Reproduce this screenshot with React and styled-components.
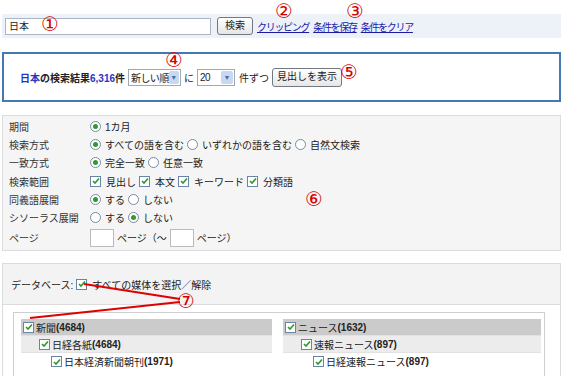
import React from 'react'
import styled, { createGlobalStyle } from 'styled-components'

const GlobalStyle = createGlobalStyle`
    body {
        margin: 0;
        background: #ffffff;
        font-family: 'Liberation Sans', 'Noto Sans CJK JP', sans-serif;
        font-size: 10px;
        color: #222222;
    }
`

const Page = styled.div`
    position: relative;
    width: 563px;
    height: 376px;
    overflow: hidden;
    padding: 14px 2px 0 2px;
    box-sizing: border-box;
    white-space: nowrap;
`

const Mark = styled.span`
    position: absolute;
    color: #d40000;
    font-family: 'DejaVu Sans', 'Noto Sans CJK JP', sans-serif;
    font-size: 20px;
    line-height: 1;
    left: ${(p) => p.x}px;
    top: ${(p) => p.y}px;
`

const SearchBar = styled.div`
    display: flex;
    align-items: center;
    height: 24px;
    padding-left: 3px;
    background: #edf2f9;
    gap: 4px;
`

const TextInput = styled.div`
    box-sizing: border-box;
    width: 206px;
    height: 17px;
    border: 1px solid #a7b5c6;
    background: #ffffff;
    padding: 1px 3px;
    line-height: 13px;
`

const Button = styled.button`
    height: ${(p) => p.h || 18}px;
    padding: 0 ${(p) => p.px || 7}px;
    margin-left: ${(p) => p.ml || 0}px;
    border: 1px solid #6f7a85;
    border-radius: 3px;
    background: linear-gradient(#ffffff, #e6e6e6);
    font-family: inherit;
    font-size: 10px;
    color: #222;
    line-height: 1;
`

const Link = styled.a`
    color: #1b1ba8;
    text-decoration: underline;
    font-size: 10px;
    letter-spacing: -1.3px;
`

const ResultBox = styled.div`
    margin-top: 14px;
    height: 50px;
    box-sizing: border-box;
    border: 2px solid #4678b4;
    display: flex;
    align-items: center;
    padding-left: 16px;
    gap: 3px;
`

const Strong = styled.span`
    font-weight: bold;
    color: ${(p) => (p.blue ? '#2436c6' : '#222')};
`

const Select = styled.div`
    box-sizing: border-box;
    display: flex;
    align-items: center;
    justify-content: space-between;
    width: ${(p) => p.w}px;
    height: 17px;
    border: 1px solid #a0a8b0;
    background: #fff;
    padding-left: 2px;
    letter-spacing: -0.6px;
`

const Arrow = styled.span`
    width: 12px;
    height: 13px;
    margin-right: 1px;
    background: #c8d8f0;
    border-radius: 2px;
    color: #4a6fa8;
    font-size: 7px;
    letter-spacing: 0;
    display: flex;
    align-items: center;
    justify-content: center;
`

const Gap = styled.span`
    margin-left: ${(p) => p.m || 0}px;
`

const Panel = styled.div`
    margin-top: 13px;
    border: 1px solid #dcdcdc;
    background: #f5f5f5;
    padding: 1px 6px 3px 6px;
    height: 136px;
    box-sizing: border-box;
    position: relative;
`

const Row = styled.div`
    display: flex;
    align-items: center;
    height: ${(p) => p.h || 18.3}px;
`

const Label = styled.div`
    width: 81px;
    color: #333;
`

const Options = styled.div`
    display: flex;
    align-items: center;
    gap: 3px;
`

const RadioDot = styled.span`
    box-sizing: border-box;
    width: 11px;
    height: 11px;
    border-radius: 50%;
    border: 1px solid #7a8aa0;
    background: #fff;
    display: inline-flex;
    align-items: center;
    justify-content: center;
    margin-right: 1px;
    &::after {
        content: '';
        width: 5px;
        height: 5px;
        border-radius: 50%;
        background: ${(p) => (p.on ? '#2f9a2f' : 'transparent')};
    }
`

const CheckBox = styled.span`
    box-sizing: border-box;
    width: 11px;
    height: 11px;
    border: 1px solid #6a84a6;
    background: #fff;
    display: inline-flex;
    align-items: center;
    justify-content: center;
    margin-right: 2px;
    flex-shrink: 0;
`

const PageBox = styled.div`
    width: 22px;
    height: 16px;
    border: 1px solid #bbb;
    background: #fff;
`

const DbPanel = styled.div`
    margin-top: 12px;
    border: 1px solid #dcdcdc;
    height: 200px;
`

const DbHeader = styled.div`
    height: 40px;
    background: #f3f3f3;
    border-bottom: 1px solid #dcdcdc;
    display: flex;
    align-items: center;
    padding-left: 8px;
    gap: 3px;
`

const DbBody = styled.div`
    padding: 7px 15px 0 10px;
`

const DbInner = styled.div`
    border: 1px solid #cfcfcf;
    border-bottom: none;
    display: grid;
    grid-template-columns: 251px 258px;
    column-gap: 11px;
    padding: 6px 0 0 7px;
    height: 80px;
`

const TreeRow = styled.div`
    display: flex;
    align-items: center;
    height: 17px;
    padding-left: ${(p) => p.indent}px;
    background: ${(p) => p.bg || 'transparent'};
    border-bottom: ${(p) => (p.bg ? '1px solid #e2e2e2' : 'none')};
    box-sizing: border-box;
`

const Count = styled.span`
    font-weight: bold;
`

function Check() {
    return (
        <CheckBox>
            <svg width="8" height="8" viewBox="0 0 8 8">
                <path d="M1 4 L3 6 L7 1.5" stroke="#2b9a2b" strokeWidth="1.6" fill="none" />
            </svg>
        </CheckBox>
    )
}

function Radio({ on, children }) {
    return (
        <Options>
            <RadioDot on={on} />
            {children}
        </Options>
    )
}

export default function App() {
    return (
        <Page>
            <GlobalStyle />
            <SearchBar>
                <TextInput>日本</TextInput>
                <Button h={18} px={7} ml={2}>検索</Button>
                <Link href="#">クリッピング</Link>
                <Link href="#">条件を保存</Link>
                <Link href="#">条件をクリア</Link>
            </SearchBar>

            <ResultBox>
                <span>
                    <Strong blue>日本</Strong>
                    <Strong>の検索結果</Strong>
                    <Strong blue>6,316</Strong>
                    <Strong>件</Strong>
                </span>
                <Select w={53}>新しい順<Arrow>▼</Arrow></Select>
                <span>に</span>
                <Select w={38}>20<Arrow>▼</Arrow></Select>
                <Gap m={1}>件ずつ</Gap>
                <Button h={19} px={4}>見出しを表示</Button>
            </ResultBox>

            <Panel>
                <Row><Label>期間</Label><Radio on>1カ月</Radio></Row>
                <Row>
                    <Label>検索方式</Label>
                    <Options>
                        <Radio on>すべての語を含む</Radio>
                        <Radio>いずれかの語を含む</Radio>
                        <Radio>自然文検索</Radio>
                    </Options>
                </Row>
                <Row>
                    <Label>一致方式</Label>
                    <Options>
                        <Radio on>完全一致</Radio>
                        <Radio>任意一致</Radio>
                    </Options>
                </Row>
                <Row>
                    <Label>検索範囲</Label>
                    <Options>
                        <Options><Check />見出し</Options>
                        <Options><Check />本文</Options>
                        <Options><Check />キーワード</Options>
                        <Options><Check />分類語</Options>
                    </Options>
                </Row>
                <Row>
                    <Label>同義語展開</Label>
                    <Options>
                        <Radio on>する</Radio>
                        <Radio>しない</Radio>
                    </Options>
                </Row>
                <Row>
                    <Label>シソーラス展開</Label>
                    <Options>
                        <Radio>する</Radio>
                        <Radio on>しない</Radio>
                    </Options>
                </Row>
                <Row h={22}>
                    <Label>ページ</Label>
                    <Options>
                        <PageBox />
                        <span>ページ（～</span>
                        <PageBox />
                        <span>ページ）</span>
                    </Options>
                </Row>
            </Panel>

            <DbPanel>
                <DbHeader>
                    <span>データベース:</span>
                    <Options><Check />すべての媒体を選択／解除</Options>
                </DbHeader>
                <DbBody>
                    <DbInner>
                        <div>
                            <TreeRow indent={2} bg="#cbcbcb"><Check /><span>新聞</span><Count>(4684)</Count></TreeRow>
                            <TreeRow indent={18} bg="#ececec"><Check /><span>日経各紙</span><Count>(4684)</Count></TreeRow>
                            <TreeRow indent={30}><Check /><span>日本経済新聞朝刊</span><Count>(1971)</Count></TreeRow>
                        </div>
                        <div>
                            <TreeRow indent={2} bg="#cbcbcb"><Check /><span>ニュース</span><Count>(1632)</Count></TreeRow>
                            <TreeRow indent={18} bg="#ececec"><Check /><span>速報ニュース</span><Count>(897)</Count></TreeRow>
                            <TreeRow indent={30}><Check /><span>日経速報ニュース</span><Count>(897)</Count></TreeRow>
                        </div>
                    </DbInner>
                </DbBody>
            </DbPanel>

            <Mark x={41} y={14}>①</Mark>
            <Mark x={275} y={1}>②</Mark>
            <Mark x={346} y={1}>③</Mark>
            <Mark x={165} y={50}>④</Mark>
            <Mark x={340} y={62}>⑤</Mark>
            <Mark x={305} y={189}>⑥</Mark>
            <Mark x={177} y={291}>⑦</Mark>
            <svg width="563" height="376" style={{ position: 'absolute', left: 0, top: 0, pointerEvents: 'none' }}>
                <line x1="84" y1="284" x2="180" y2="299" stroke="#e00000" strokeWidth="2" />
                <line x1="180" y1="302" x2="30" y2="318" stroke="#e00000" strokeWidth="2" />
            </svg>
        </Page>
    )
}
